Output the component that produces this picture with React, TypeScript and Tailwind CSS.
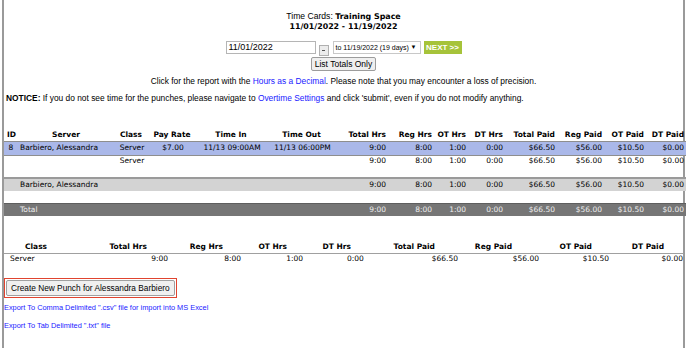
import React from 'react';

const rows = [
    { hrs: '9:00', reg: '8:00', ot: '1:00', dt: '0:00', tp: '$66.50', rp: '$56.00', op: '$10.50', dp: '$0.00' },
];

const headCols = [
    { label: 'ID', w: 'w-[13px]', align: 'text-left pl-[3px]' },
    { label: 'Server', w: 'w-[100px]', align: 'text-center' },
    { label: 'Class', w: 'w-[30px]', align: 'text-center' },
    { label: 'Pay Rate', w: 'w-[52px]', align: 'text-center' },
    { label: 'Time In', w: 'w-[66px]', align: 'text-center' },
    { label: 'Time Out', w: 'w-[75px]', align: 'text-center' },
    { label: 'Total Hrs', w: 'w-[48px]', align: 'text-right' },
    { label: 'Reg Hrs', w: 'w-[46px]', align: 'text-right' },
    { label: 'OT Hrs', w: 'w-[34px]', align: 'text-right' },
    { label: 'DT Hrs', w: 'w-[37px]', align: 'text-right' },
    { label: 'Total Paid', w: 'w-[52px]', align: 'text-right' },
    { label: 'Reg Paid', w: 'w-[47px]', align: 'text-right' },
    { label: 'OT Paid', w: 'w-[42px]', align: 'text-right' },
    { label: 'DT Paid', w: 'w-[40px]', align: 'text-right' },
];

function NumCells({ light }: { light?: boolean }) {
    const r = rows[0];
    const c = `text-right pr-[2px] ${light ? 'text-[#eeeeee]' : ''}`;
    return (
        <>
            <td className={c}>{r.hrs}</td>
            <td className={c}>{r.reg}</td>
            <td className={c}>{r.ot}</td>
            <td className={c}>{r.dt}</td>
            <td className={c}>{r.tp}</td>
            <td className={c}>{r.rp}</td>
            <td className={c}>{r.op}</td>
            <td className={c}>{r.dp}</td>
        </>
    );
}

export default function App() {
    const verdana = "font-['DejaVu_Sans',Verdana,sans-serif]";
    const arial = "font-['Liberation_Sans',Arial,sans-serif]";
    return (
        <div className="w-[688px] h-[348px] bg-white overflow-hidden">
            <div className="ml-[2px] w-[683px] h-[348px] border-x-[2px] border-[#9a9a9a] text-black">
                {/* title */}
                <div className="pt-[11px] text-center leading-[10px]">
                    <div className={`${arial} text-[8.6px]`}>
                        Time Cards: <span className={`${verdana} font-bold text-[7.9px]`}>Training Space</span>
                    </div>
                    <div className={`${verdana} font-bold text-[7.9px] mt-[0px]`}>11/01/2022 - 11/19/2022</div>
                </div>

                {/* date form */}
                <div className={`${arial} mt-[9px] flex flex-col items-center`}>
                    <div className="flex items-start">
                        <div className="w-[90px] h-[13px] border border-[#b5b5b5] text-[9px] leading-[11px] pl-[2px]">
                            11/01/2022
                        </div>
                        <div className="ml-[3px] mt-[4px] w-[10px] h-[11px] border border-[#b0b0b0] bg-[#ececec] flex items-center justify-center">
                            <div className="w-[3px] h-[1px] bg-[#555]" />
                        </div>
                        <div className="ml-[4px] w-[88px] h-[13px] border border-[#c8c8c8] text-[7px] leading-[11px] pl-[2px] flex items-center justify-between pr-[3px] whitespace-nowrap">
                            <span>to 11/19/2022 (19 days)</span>
                            <span className="text-[6px]">▼</span>
                        </div>
                        <div className="ml-[3px] w-[38px] h-[13px] bg-[#a6c33a] text-white font-bold text-[8px] leading-[13px] text-center">
                            NEXT &gt;&gt;
                        </div>
                    </div>
                    <div className="mt-[1px] w-[65px] h-[14px] border border-[#9c9c9c] rounded-[2px] bg-[#efefef] text-[8.5px] leading-[12px] text-center">
                        List Totals Only
                    </div>
                </div>

                {/* notices */}
                <div className={`${arial} text-[8.4px] leading-[10px]`}>
                    <div className="mt-[5px] text-center">
                        Click for the report with the <span className="text-[#1a1aff]">Hours as a Decimal</span>. Please note that you may encounter a loss of precision.
                    </div>
                    <div className="mt-[7px] pl-[2px]">
                        <span className="font-bold">NOTICE:</span> If you do not see time for the punches, please navigate to{' '}
                        <span className="text-[#1a1aff]">Overtime Settings</span> and click 'submit', even if you do not modify anything.
                    </div>
                </div>

                {/* punches table */}
                <table className={`${verdana} mt-[26px] table-fixed border-collapse w-[679px] text-[7.5px] leading-[10px]`}>
                    <colgroup>
                        {headCols.map((c) => (
                            <col key={c.label} className={c.w} />
                        ))}
                    </colgroup>
                    <thead>
                        <tr className="h-[12px]">
                            {headCols.map((c) => (
                                <th key={c.label} className={`${c.align} font-bold pr-[2px]`}>
                                    {c.label}
                                </th>
                            ))}
                        </tr>
                    </thead>
                    <tbody>
                        <tr className="h-[14px] bg-[#aab8e9] border-y-[1.5px] border-[#8e8e8e]">
                            <td className="text-center pl-[1px]">8</td>
                            <td className="pl-[3px]">Barbiero, Alessandra</td>
                            <td className="text-center">Server</td>
                            <td className="text-center">$7.00</td>
                            <td className="text-center">11/13 09:00AM</td>
                            <td className="text-center">11/13 06:00PM</td>
                            <NumCells />
                        </tr>
                        <tr className="h-[12px]">
                            <td />
                            <td />
                            <td className="text-center">Server</td>
                            <td />
                            <td />
                            <td />
                            <NumCells />
                        </tr>
                        <tr className="h-[11px]">
                            <td colSpan={14} />
                        </tr>
                        <tr className="h-[13px] bg-[#d3d3d3] border-t-[2px] border-[#9a9a9a]">
                            <td />
                            <td className="pl-[3px]" colSpan={5}>
                                Barbiero, Alessandra
                            </td>
                            <NumCells />
                        </tr>
                        <tr className="h-[12px]">
                            <td colSpan={14} />
                        </tr>
                        <tr className="h-[13px] bg-[#767676] text-[#eeeeee] border-t-[1.5px] border-[#5e5e5e]">
                            <td />
                            <td className="pl-[3px]" colSpan={5}>
                                Total
                            </td>
                            <NumCells light />
                        </tr>
                    </tbody>
                </table>

                {/* class summary */}
                <table className={`${verdana} mt-[25px] table-fixed border-collapse w-[679px] text-[7.5px] leading-[10px]`}>
                    <colgroup>
                        <col className="w-[83px]" />
                        <col className="w-[81px]" />
                        <col className="w-[73px]" />
                        <col className="w-[62px]" />
                        <col className="w-[64px]" />
                        <col className="w-[91px]" />
                        <col className="w-[81px]" />
                        <col className="w-[70px]" />
                        <col className="w-[74px]" />
                    </colgroup>
                    <thead>
                        <tr className="h-[12px] border-b-[1.5px] border-[#a0a0a0]">
                            <th className="text-left pl-[21px]">Class</th>
                            <th className="text-right pr-[21px]">Total Hrs</th>
                            <th className="text-right pr-[18px]">Reg Hrs</th>
                            <th className="text-right pr-[16px]">OT Hrs</th>
                            <th className="text-right pr-[16px]">DT Hrs</th>
                            <th className="text-right pr-[23px]">Total Paid</th>
                            <th className="text-right pr-[27px]">Reg Paid</th>
                            <th className="text-right pr-[17px]">OT Paid</th>
                            <th className="text-right pr-[19px]">DT Paid</th>
                        </tr>
                    </thead>
                    <tbody>
                        <tr className="h-[12px]">
                            <td className="pl-[6px]">Server</td>
                            <td className="text-right">9:00</td>
                            <td className="text-right">8:00</td>
                            <td className="text-right">1:00</td>
                            <td className="text-left pl-[44px]">0:00</td>
                            <td className="text-right">$66.50</td>
                            <td className="text-right">$56.00</td>
                            <td className="text-right">$10.50</td>
                            <td className="text-right">$0.00</td>
                        </tr>
                    </tbody>
                </table>

                {/* actions */}
                <div className={`${arial} mt-[9px] pl-[0px]`}>
                    <div className="inline-block border-[1.5px] border-[#e0442f] p-[1px]">
                        <div className="h-[16px] px-[4px] border border-[#a0a0a0] rounded-[2px] bg-[#f0f0f0] text-[8.3px] leading-[14px]">
                            Create New Punch for Alessandra Barbiero
                        </div>
                    </div>
                    <div className="mt-[5px] text-[7.4px] leading-[10px] text-[#1a1aff]">
                        Export To Comma Delimited ".csv" file for import into MS Excel
                    </div>
                    <div className="mt-[8px] text-[7.4px] leading-[10px] text-[#1a1aff]">
                        Export To Tab Delimited ".txt" file
                    </div>
                </div>
            </div>
        </div>
    );
}
